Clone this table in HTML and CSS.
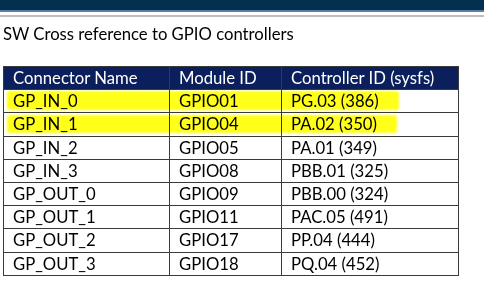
FILE: index.html
```html
<!DOCTYPE html>
<html>
<head>
<meta charset="utf-8">
<link rel="stylesheet" href="styles.css">
</head>
<body>
<div class="topbar"></div>
<div class="rule"></div>
<h1 class="title">SW Cross reference to GPIO controllers</h1>
<div class="wrap">
<table class="grid">
<thead>
<tr><th class="c1">Connector Name</th><th class="c2">Module ID</th><th class="c3">Controller ID (sysfs)</th></tr>
</thead>
<tbody>
<tr><td>GP_IN_0</td><td>GPIO01</td><td>PG.03 (386)</td></tr>
<tr><td>GP_IN_1</td><td>GPIO04</td><td>PA.02 (350)</td></tr>
<tr><td>GP_IN_2</td><td>GPIO05</td><td>PA.01 (349)</td></tr>
<tr><td>GP_IN_3</td><td>GPIO08</td><td>PBB.01 (325)</td></tr>
<tr><td>GP_OUT_0</td><td>GPIO09</td><td>PBB.00 (324)</td></tr>
<tr><td>GP_OUT_1</td><td>GPIO11</td><td>PAC.05 (491)</td></tr>
<tr><td>GP_OUT_2</td><td>GPIO17</td><td>PP.04 (444)</td></tr>
<tr><td>GP_OUT_3</td><td>GPIO18</td><td>PQ.04 (452)</td></tr>
</tbody>
</table>
<span class="mark mark1"></span>
<span class="mark mark2"></span>
</div>
</body>
</html>
```
FILE: styles.css
```css
html, body { margin: 0; padding: 0; background: #fff; }
body { font-family: Lato, "Open Sans", sans-serif; color: #000; }
.topbar { height: 10px; background: #04304f; border-bottom: 2px solid #5d7ba6; }
.rule { height: 2px; background: #bdbdbd; margin-top: 3px; }
.title { font-size: 16.7px; font-weight: normal; margin: 0; padding: 7px 0 0 3px; height: 49px; box-sizing: border-box; line-height: 20px; }
.wrap { position: relative; margin-left: 3px; width: 455px; }
.grid { border-collapse: collapse; width: 455px; table-layout: fixed; font-size: 16.7px; }
.grid th, .grid td { border: 1px solid #3a3a3a; height: 23.2px; padding: 0 0 0 9px; text-align: left; line-height: 22px; box-sizing: border-box; }
.grid th { background: #0a1f5c; color: #fff; font-weight: normal; border-color: #3a3a3a; }
.c1 { width: 166px; }
.c2 { width: 112px; }
.c3 { width: 177px; }
.mark { position: absolute; background: #ffff1a; mix-blend-mode: multiply; filter: blur(1px); border-radius: 3px; }
.mark1 { left: 4px; top: 25px; width: 392px; height: 19px; }
.mark2 { left: 4px; top: 49px; width: 390px; height: 18px; }
```
